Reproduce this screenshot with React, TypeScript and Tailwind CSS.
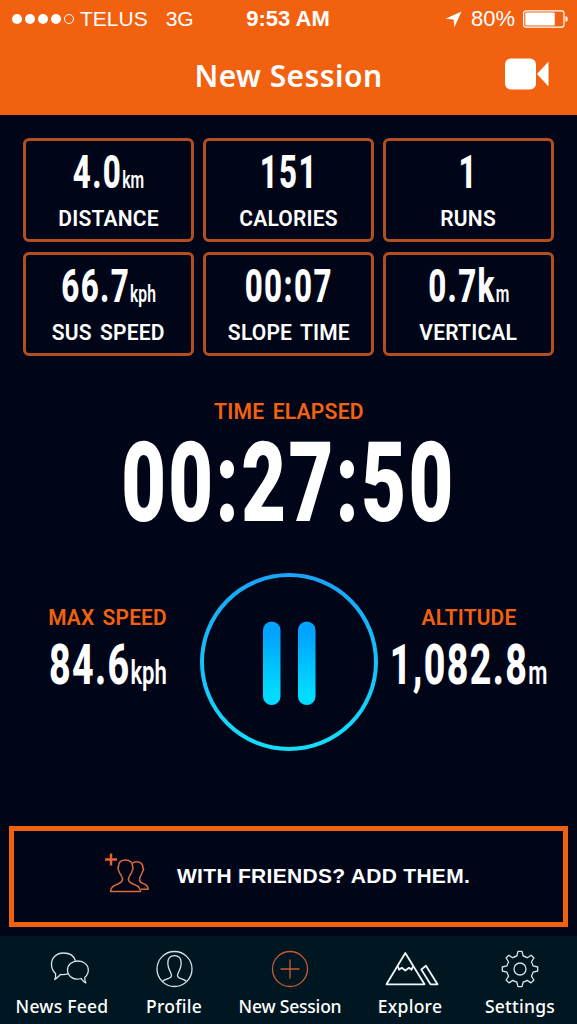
import type { ReactNode } from 'react'

type Stat = { value: string; unit?: string; label: string }

const stats: Stat[] = [
  { value: '4.0', unit: 'km', label: 'DISTANCE' },
  { value: '151', label: 'CALORIES' },
  { value: '1', label: 'RUNS' },
  { value: '66.7', unit: 'kph', label: 'SUS SPEED' },
  { value: '00:07', label: 'SLOPE TIME' },
  { value: '0.7k', unit: 'm', label: 'VERTICAL' },
]

const labelFont = "font-['Roboto',sans-serif] text-[22px] leading-6 font-semibold whitespace-nowrap tracking-[0.2px] [word-spacing:3px]"
const digitFont = "block font-['Roboto',sans-serif] whitespace-nowrap"

function StatusBar() {
  return (
    <div className="grid h-[38px] grid-cols-3 items-center pr-[9px] pl-3 font-['Liberation_Sans',Arial,sans-serif] text-[21px] leading-6">
      <div className="flex items-center">
        <div className="flex gap-[3px]">
          {[0, 1, 2, 3].map(i => <span key={i} className="size-[10px] rounded-full bg-white" />)}
          <span className="size-[10px] rounded-full border border-white" />
        </div>
        <span className="ml-[6px]">TELUS</span>
        <span className="ml-[18px]">3G</span>
      </div>
      <div className="pr-1 text-center text-[22px] font-bold whitespace-nowrap">9:53 AM</div>
      <div className="flex items-center justify-end">
        <svg width="17" height="17" viewBox="0 0 17 17" fill="white">
          <path d="M16.5 0.5 L9.3 16.5 L8.6 8.4 L0.5 7.7 Z" />
        </svg>
        <span className="ml-[9px] text-[22px]">80%</span>
        <svg className="ml-[8px]" width="45" height="18" viewBox="0 0 45 18" fill="none">
          <rect x="0.6" y="0.8" width="40.4" height="16.4" rx="2.5" stroke="white" strokeWidth="1.2" />
          <rect x="2.3" y="2.5" width="29.5" height="13" rx="1" fill="white" />
          <path d="M42.5 6 Q44.8 6.5 44.8 9 T42.5 12 Z" fill="white" />
        </svg>
      </div>
    </div>
  )
}

function Header() {
  return (
    <header className="h-[115px] bg-[#f26110]">
      <StatusBar />
      <div className="grid h-[75px] grid-cols-[1fr_auto_1fr] items-center">
        <span />
        <h1 className="font-['Noto_Sans',sans-serif] text-[30px] leading-10 font-semibold tracking-[0.45px]">New Session</h1>
        <svg className="mr-7 mb-1 justify-self-end" width="45" height="32" viewBox="0 0 45 32" fill="white">
          <rect x="1" y="0.5" width="31" height="31" rx="6" />
          <path d="M33 16 L44.5 3.5 V28.5 Z" />
        </svg>
      </div>
    </header>
  )
}

function StatCard({ value, unit, label }: Stat) {
  return (
    <div className="flex flex-col items-center rounded-[6px] border-3 border-[#b34e20]">
      <span className={`${digitFont} mt-[7px] h-12 scale-x-[0.68] text-[46px] leading-[48px] font-extrabold tracking-[2px]`}>
        {value}
        {unit && <span className="text-[23px] leading-none font-semibold tracking-normal">{unit}</span>}
      </span>
      <span className={`${labelFont} mt-[11px] scale-x-[0.955]`}>{label}</span>
    </div>
  )
}

function Reading({ value, unit, label }: Stat) {
  return (
    <div className="flex flex-col items-center pt-[33px]">
      <span className={`${labelFont} scale-x-[0.95] text-[#f26110]`}>{label}</span>
      <span className={`${digitFont} mt-[7px] h-14 scale-x-[0.67] text-[56px] leading-[56px] font-extrabold tracking-[2px]`}>
        {value}
        <span className="text-[33px] leading-none font-semibold tracking-normal">{unit}</span>
      </span>
    </div>
  )
}

function PauseButton() {
  return (
    <button aria-label="Pause">
      <svg width="178" height="178" viewBox="0 0 178 178" fill="none">
        <defs>
          <linearGradient id="ring" x1="0" y1="0" x2="0" y2="178" gradientUnits="userSpaceOnUse">
            <stop stopColor="#1aa3f8" />
            <stop offset="1" stopColor="#12dffb" />
          </linearGradient>
          <linearGradient id="bars" x1="0" y1="49" x2="0" y2="132" gradientUnits="userSpaceOnUse">
            <stop offset="0.15" stopColor="#00a4ff" />
            <stop offset="0.85" stopColor="#00dcff" />
          </linearGradient>
        </defs>
        <circle cx="89" cy="89" r="87" stroke="url(#ring)" strokeWidth="4" />
        <rect x="63" y="48.5" width="17.5" height="83.5" rx="8.75" fill="url(#bars)" />
        <rect x="98" y="48.5" width="17.5" height="83.5" rx="8.75" fill="url(#bars)" />
      </svg>
    </button>
  )
}

function FriendsIcon() {
  return (
    <svg className="mb-[5px] overflow-visible" width="44" height="40" viewBox="0 0 44 40" fill="none" stroke="#dc6a38" strokeWidth="1.5" strokeLinejoin="round">
      <path d="M6 -0.5 V11.5 M0 5.5 H12" strokeWidth="2.4" stroke="#e8622a" />
      <path d="M5.5 37.5 C5.5 33 9 31.5 13 30 C18 28 18.5 25.5 16.5 22 C15.5 20 14.3 19.5 14 17 C12.8 16 12.8 13.5 13.5 12.5 C13.5 8.500 16 6 20.5 6 C25 6 27.6 8.500 27.500 12.500 C28.200 13.500 28.200 16 27 17 C26.700 19.500 25.500 20 24.500 22 C22.500 25.500 23 28 28 30 C32 31.500 35.500 33 35.500 37.500 Z" />
      <path d="M27.5 9.2 C28.5 8.2 30 7.8 31.8 7.8 C35.5 7.8 38 10 37.8 13.5 C38.5 14.5 38.5 16.5 37.5 17.5 C37.2 19.5 36.5 20.5 35.5 22 C33.8 25.5 34 27.5 37 29 C40.500 30.500 43.200 31.500 43.200 35.300 H36" />
    </svg>
  )
}

const tabs: { label: string; wide?: boolean; icon: ReactNode }[] = [
  {
    label: 'News Feed',
    wide: true,
    icon: (
      <svg className="translate-x-2" width="40" height="38" viewBox="50 950 40 38" fill="none" stroke="#d5e3ea" strokeWidth="1.3" strokeLinejoin="round">
        <path d="M75.5 960.8 C74 956 69.5 953 63.5 953 C56.5 953 51.5 957.8 51.5 964 C51.5 968.5 53 971.3 55.5 973.5 C56 976 55.5 978 54.7 979.5 C57.5 978 58.5 976.5 60.5 974.5 C63.5 975 66 974.6 68.3 973.6" />
        <path d="M85.8 983 C83 981.5 82.5 980 81 978.5 C73.5 980.8 67.5 976 67.5 970 C67.5 964.8 72 961 78 961 C84 961 88.3 965 88.3 970 C88.3 973.5 86.8 975.8 84.8 977.3 C84.5 979.5 85 981.5 85.8 983 Z" />
      </svg>
    ),
  },
  {
    label: 'Profile',
    wide: true,
    icon: (
      <svg width="38" height="38" viewBox="0 0 38 38" fill="none" stroke="#d5e3ea" strokeWidth="1.3">
        <circle cx="19.5" cy="19" r="17.5" />
        <path d="M7.5 31.5 C10 28.5 16.5 29 16.5 25.5 C16.5 22.5 13 20 12.8 13.5 C12.6 8.5 15 5.6 19.5 5.6 C24 5.6 26.4 8.5 26.2 13.5 C26 20 22.5 22.5 22.5 25.5 C22.5 29 29 28.5 31.5 31.5" />
      </svg>
    ),
  },
  {
    label: 'New Session',
    icon: (
      <svg width="38" height="38" viewBox="0 0 38 38" fill="none" stroke="#c65a32" strokeWidth="1.3">
        <circle cx="19" cy="19" r="17.5" />
        <path d="M19 9.5 V28.5 M9.5 19 H28.5" />
      </svg>
    ),
  },
  {
    label: 'Explore',
    wide: true,
    icon: (
      <svg className="translate-x-[2px]" width="54" height="38" viewBox="385 950 54 38" fill="none" stroke="#f0f6f8" strokeWidth="1.8" strokeLinejoin="round">
        <path d="M405.3 953 L386.5 984.3 H424.5 Z" />
        <path d="M398 966.5 L399 969.7 L401.8 967.8 L405.3 970.5 L409 967.8 L411.5 969.7 L413 966.3" />
        <path d="M426 965.7 L421.3 969.5 L430.5 984.3 H437.5 Z" />
      </svg>
    ),
  },
  {
    label: 'Settings',
    wide: true,
    icon: (
      <svg width="38" height="38" viewBox="0 0 38 38" fill="none" stroke="#d5e3ea" strokeWidth="1.3" strokeLinejoin="round">
        <circle cx="19" cy="19" r="6" />
        <path d="M17 1.3 H21 L22.2 6 Q24.5 6.5 26.3 7.8 L30.2 5.2 L32.9 8 L30.4 12 Q31.5 13.8 32 15.8 L36.7 17 V21 L32 22.2 Q31.5 24.4 30.4 26.1 L32.9 30 L30 32.9 L26.1 30.4 Q24.3 31.5 22.2 32 L21 36.7 H17 L15.8 32 Q13.7 31.5 11.9 30.4 L8 32.9 L5.1 30 L7.6 26.1 Q6.5 24.4 6 22.2 L1.3 21 V17 L6 15.8 Q6.5 13.8 7.6 12 L5.1 8 L7.8 5.2 L11.7 7.8 Q13.5 6.5 15.8 6 Z" />
      </svg>
    ),
  },
]

function TabBar() {
  return (
    <nav className="grid h-[88px] grid-cols-[116px_108px_124px_116px_104px] bg-[#001722] pt-[14px] pl-1">
      {tabs.map(tab => (
        <a key={tab.label} className="flex flex-col items-center">
          {tab.icon}
          <span
            className={`mt-[6px] font-['Noto_Sans',sans-serif] text-[17.5px] leading-6 font-medium whitespace-nowrap ${tab.wide ? 'tracking-[0.25px]' : 'tracking-[-0.2px]'}`}
          >
            {tab.label}
          </span>
        </a>
      ))}
    </nav>
  )
}

export default function App() {
  return (
    <div className="flex h-[1024px] w-[577px] flex-col overflow-hidden bg-[#000518] text-white">
      <Header />
      <main className="flex flex-1 flex-col">
        <section className="mt-[23px] ml-[23px] grid grid-cols-[repeat(3,171px)] grid-rows-[104px_104px] gap-x-[9px] gap-y-[10px]">
          {stats.map(s => <StatCard key={s.label} {...s} />)}
        </section>

        <section className="mt-[44px] flex flex-col items-center">
          <span className={`${labelFont} scale-x-[0.96] text-[#f26110]`}>TIME ELAPSED</span>
          <span className={`${digitFont} mt-[9px] scale-x-[0.69] text-[112px] leading-[100px] font-black tracking-[3.5px]`}>00:27:50</span>
        </section>

        <section className="mt-[40px] grid grid-cols-[184px_178px_182px] pl-4">
          <Reading label="MAX SPEED" value="84.6" unit="kph" />
          <PauseButton />
          <Reading label="ALTITUDE" value="1,082.8" unit="m" />
        </section>

        <button className="mt-auto mr-[9px] mb-[9px] ml-[9px] flex h-[101px] items-center border-[5px] border-[#f26110] pl-[91px]">
          <FriendsIcon />
          <span className="mb-[2px] ml-7 font-['Liberation_Sans',Arial,sans-serif] text-[21px] font-bold tracking-[0.3px] whitespace-nowrap">
            WITH FRIENDS? ADD THEM.
          </span>
        </button>
      </main>
      <TabBar />
    </div>
  )
}
